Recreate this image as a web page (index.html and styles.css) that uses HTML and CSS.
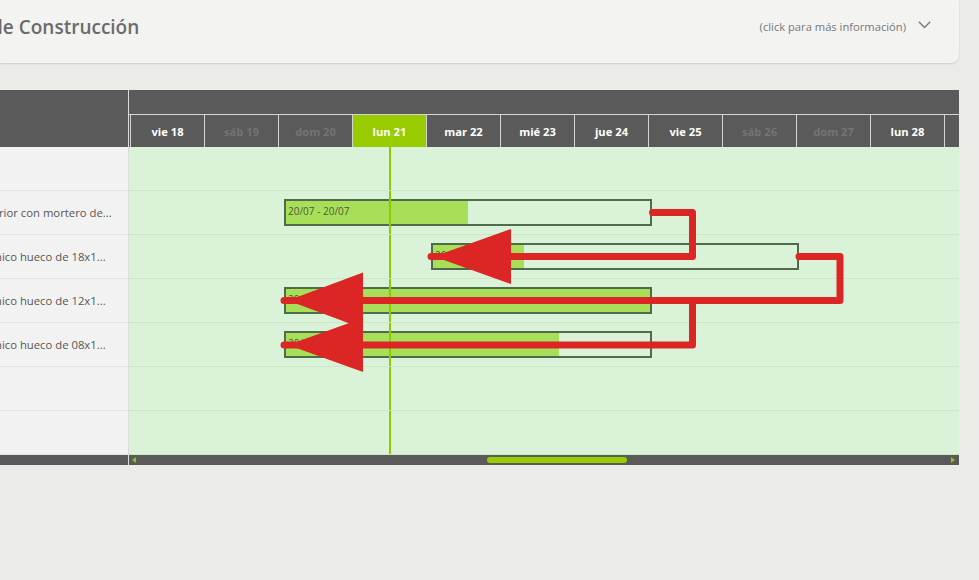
FILE: index.html
```html
<!DOCTYPE html>
<html lang="es">
<head>
<meta charset="utf-8">
<title>Gantt de Construcción</title>
<link rel="stylesheet" href="styles.css">
</head>
<body>
<div class="page">
  <header class="card">
    <h1 class="title">de Construcción</h1>
    <div class="info">
      <span>(click para más información)</span>
      <svg class="chev" width="13" height="8" viewBox="0 0 13 8"><path d="M0.8 0.8 L6.5 6.6 L12.2 0.8" fill="none" stroke="#7a7a7a" stroke-width="1.4"/></svg>
    </div>
  </header>

  <section class="gantt">
    <div class="left">
      <div class="left-head"></div>
      <div class="lrow"></div>
      <div class="lrow"><span class="label cut1">rior con mortero de...</span></div>
      <div class="lrow"><span class="label cut2">nico hueco de 18x1...</span></div>
      <div class="lrow"><span class="label cut2">nico hueco de 12x1...</span></div>
      <div class="lrow"><span class="label cut2">nico hueco de 08x1...</span></div>
      <div class="lrow"></div>
      <div class="lrow"></div>
      <div class="scroll-l"></div>
    </div>

    <div class="timeline">
      <div class="t-top"></div>
      <div class="t-dates">
        <div class="day">vie 18</div>
        <div class="day off">sáb 19</div>
        <div class="day off">dom 20</div>
        <div class="day today">lun 21</div>
        <div class="day">mar 22</div>
        <div class="day">mié 23</div>
        <div class="day">jue 24</div>
        <div class="day">vie 25</div>
        <div class="day off">sáb 26</div>
        <div class="day off">dom 27</div>
        <div class="day">lun 28</div>
        <div class="day">mar 29</div>
      </div>
      <div class="t-body">
        <div class="today-line"></div>
        <div class="trow"></div>
        <div class="trow">
          <div class="bar" style="left:155px;width:368px"><div class="fill" style="width:50%"></div><span class="bar-text">20/07 - 20/07</span></div>
        </div>
        <div class="trow">
          <div class="bar" style="left:302px;width:368px"><div class="fill" style="width:25%"></div><span class="bar-text">20/07 - 22/07</span></div>
        </div>
        <div class="trow">
          <div class="bar" style="left:155px;width:368px"><div class="fill" style="width:100%"></div><span class="bar-text">20/07 - 20/07</span></div>
        </div>
        <div class="trow">
          <div class="bar" style="left:155px;width:368px"><div class="fill" style="width:75%"></div><span class="bar-text">20/07 - 20/07</span></div>
        </div>
        <div class="trow"></div>
        <div class="trow"></div>
        <svg class="links" width="830" height="308" viewBox="0 0 830 308">
          <g transform="translate(-129,-147)" fill="#dc2626" stroke="#dc2626">
            <path d="M652.5 212.5 H692.5 V256.5 H431" fill="none" stroke-width="7" stroke-linecap="round" stroke-linejoin="round"/>
            <path d="M799 256.5 H840 V300.5 H284" fill="none" stroke-width="7" stroke-linecap="round" stroke-linejoin="round"/>
            <path d="M652.5 300.5 H692.5 V345 H284" fill="none" stroke-width="7" stroke-linecap="round" stroke-linejoin="round"/>
            <polygon points="434,256.5 511,229 511,284" stroke="none"/>
            <polygon points="288,300.5 363,272.5 363,328.5" stroke="none"/>
            <polygon points="288,345 363,318 363,372" stroke="none"/>
          </g>
        </svg>
      </div>
      <div class="t-scroll">
        <span class="arr arr-l"></span>
        <span class="thumb" style="margin-left:351px"></span>
        <span class="arr arr-r"></span>
      </div>
    </div>
  </section>
</div>
</body>
</html>
```

FILE: styles.css
```css
* { box-sizing: border-box; }

body {
  margin: 0;
  background: #ebebe7;
  font-family: "Open Sans", "Noto Sans", "DejaVu Sans", sans-serif;
}

.page {
  width: 959px;
}

/* top card */
.card {
  height: 63px;
  background: #f3f3f1;
  border-bottom-right-radius: 8px;
  box-shadow: 0 1px 2px rgba(0, 0, 0, 0.13);
  display: flex;
  align-items: flex-start;
  justify-content: space-between;
  padding: 0 28px 0 0;
}

.title {
  margin: 14px 0 0 -9px;
  font-size: 19px;
  line-height: 26px;
  font-weight: 600;
  color: #6b6b6b;
  white-space: nowrap;
}

.info {
  display: flex;
  align-items: center;
  gap: 12px;
  margin-top: 18px;
  font-size: 11.2px;
  line-height: 18px;
  color: #787878;
}

.chev {
  display: block;
  margin-top: -4px;
}

/* gantt */
.gantt {
  margin-top: 27px;
  display: grid;
  grid-template-columns: 128px 830px;
  column-gap: 1px;
  background: #dcdcdc;
}

.left {
  display: flex;
  flex-direction: column;
  overflow: hidden;
}

.left-head {
  height: 57px;
  background: #5a5a5a;
}

.lrow {
  height: 44px;
  background: #f2f2f2;
  border-bottom: 1px solid #e3e3e3;
  display: flex;
  align-items: center;
  overflow: hidden;
  white-space: nowrap;
  font-size: 11.3px;
  color: #555;
}

.label.cut1 { margin-left: -1px; }
.label.cut2 { margin-left: -5px; }

.scroll-l {
  height: 10px;
  background: #5a5a5a;
}

.timeline {
  display: flex;
  flex-direction: column;
  overflow: hidden;
}

.t-top {
  height: 25px;
  background: #5a5a5a;
  border-bottom: 1px solid #d4d4d4;
}

.t-dates {
  height: 32px;
  background: #5a5a5a;
  display: flex;
  padding-left: 1px;
  overflow: hidden;
}

.day {
  flex: 0 0 74px;
  border-left: 1px solid #d4d4d4;
  display: flex;
  align-items: center;
  justify-content: center;
  font-size: 11.2px;
  font-weight: 700;
  color: #ffffff;
  padding-top: 1px;
}

.day.off { color: #747474; }
.day.today { background: #99cc00; }

.t-body {
  position: relative;
  background: #daf3d8;
}

.trow {
  height: 44px;
  border-bottom: 1px solid #cde5cb;
  position: relative;
}

.today-line {
  position: absolute;
  left: 260px;
  top: 0;
  bottom: 0;
  width: 2px;
  z-index: 2;
  background: repeating-linear-gradient(to bottom, #8ccc00 0 43px, #cde5cb 43px 44px);
}

.bar {
  position: absolute;
  top: 8px;
  height: 27px;
  border: 2px solid #4f6a4d;
  overflow: hidden;
}

.fill {
  position: absolute;
  left: 0;
  top: 0;
  bottom: 0;
  background: #a8df58;
}

.bar-text {
  position: relative;
  display: block;
  padding-left: 2px;
  font-size: 10px;
  line-height: 20px;
  color: #4b5a3c;
  white-space: nowrap;
}

.links {
  position: absolute;
  left: 0;
  top: 0;
  z-index: 3;
  overflow: visible;
}

.t-scroll {
  height: 10px;
  background: #5a5a5a;
  display: flex;
  align-items: center;
  padding: 0 4px 0 3px;
}

.arr {
  width: 0;
  height: 0;
  border-top: 3px solid transparent;
  border-bottom: 3px solid transparent;
}

.arr-l { border-right: 4px solid #8cc800; }
.arr-r { border-left: 4px solid #8cc800; margin-left: auto; }

.thumb {
  width: 140px;
  height: 6px;
  border-radius: 3px;
  background: #99cc00;
}
```
